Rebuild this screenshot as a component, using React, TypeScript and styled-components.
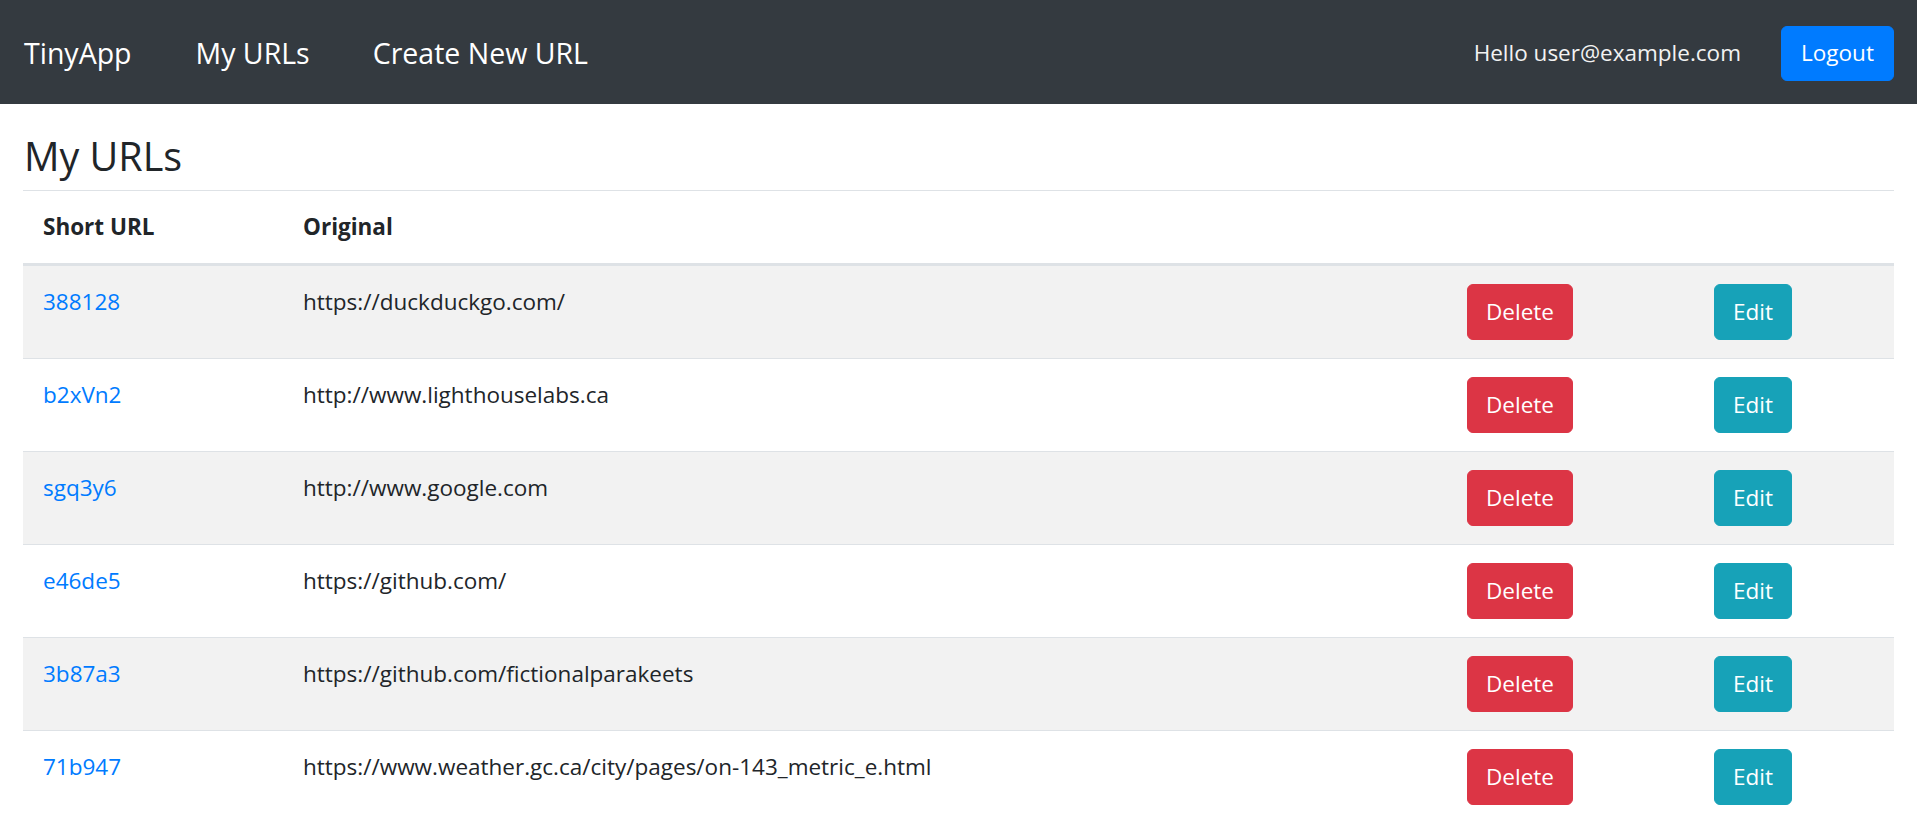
import React from "react";
import styled, { createGlobalStyle } from "styled-components";

const GlobalStyle = createGlobalStyle`
  html, body { margin: 0; padding: 0; background: #fff; }
  body {
    font-family: "Open Sans", "Noto Sans", sans-serif;
    font-size: 22.5px;
    line-height: 36px;
    color: #212529;
  }
  * { box-sizing: border-box; }
`;

const NavBar = styled.nav`
  height: 104px;
  background: #343a40;
  display: flex;
  align-items: center;
  padding: 2px 23px 0 24px;
`;

const Brand = styled.a`
  font-size: 28.5px;
  color: #fff;
  text-decoration: none;
  margin-right: 64px;
  white-space: nowrap;
`;

const NavLinks = styled.div`
  display: flex;
  gap: 63px;
  flex: 1;
`;

const NavLink = styled.a`
  font-size: 28.5px;
  color: #fff;
  text-decoration: none;
  white-space: nowrap;
`;

const Greeting = styled.span`
  color: #f2f2f2;
  margin-right: 40px;
  white-space: nowrap;
`;

const Button = styled.button<{ $variant: "primary" | "danger" | "info" }>`
  font-family: inherit;
  font-size: 22.5px;
  line-height: 36px;
  padding: 9px 18px;
  border: 1.5px solid transparent;
  border-radius: 6px;
  color: #fff;
  cursor: pointer;
  background: ${(p) =>
    p.$variant === "primary" ? "#007bff" : p.$variant === "danger" ? "#dc3545" : "#17a2b8"};
  border-color: ${(p) =>
    p.$variant === "primary" ? "#007bff" : p.$variant === "danger" ? "#dc3545" : "#17a2b8"};
`;

const LogoutButton = styled(Button)`
  height: 55px;
  width: 113px;
  padding: 0;
  display: flex;
  align-items: center;
  justify-content: center;
`;

const RowButton = styled(Button)<{ $w: number }>`
  height: 56px;
  width: ${(p) => p.$w}px;
  display: flex;
  align-items: center;
  justify-content: center;
  padding: 0;
`;

const Main = styled.main`
  padding: 27px 23px 0 23px;
`;

const Title = styled.h3`
  margin: 0;
  font-size: 39.5px;
  font-weight: 400;
  line-height: 50px;
  padding-left: 1px;
`;

const Divider = styled.hr`
  margin: 9px 0 0 0;
  border: 0;
  border-top: 1px solid #dee2e6;
`;

const Table = styled.table`
  width: 100%;
  border-collapse: collapse;
  table-layout: fixed;
`;

const HeadCell = styled.th<{ $w?: number }>`
  text-align: left;
  font-weight: 700;
  padding: 18px 18px 18px 20px;
  height: 72px;
  vertical-align: middle;
  border-bottom: 3px solid #dee2e6;
  width: ${(p) => (p.$w ? `${p.$w}px` : "auto")};
`;

const Row = styled.tr<{ $striped: boolean }>`
  background: ${(p) => (p.$striped ? "#f2f2f2" : "#fff")};
`;

const Cell = styled.td`
  padding: 18px 18px 18px 20px;
  vertical-align: top;
  height: 93px;
  white-space: nowrap;
  border-top: 1px solid #dee2e6;
`;

const ButtonCell = styled(Cell)`
  padding-left: 18px;
`;

const ShortLink = styled.a`
  color: #007bff;
  text-decoration: none;
`;

const urls: [string, string][] = [
  ["388128", "https://duckduckgo.com/"],
  ["b2xVn2", "http://www.lighthouselabs.ca"],
  ["sgq3y6", "http://www.google.com"],
  ["e46de5", "https://github.com/"],
  ["3b87a3", "https://github.com/fictionalparakeets"],
  ["71b947", "https://www.weather.gc.ca/city/pages/on-143_metric_e.html"],
];

export default function App() {
  return (
    <>
      <GlobalStyle />
      <NavBar>
        <Brand href="#">TinyApp</Brand>
        <NavLinks>
          <NavLink href="#">My URLs</NavLink>
          <NavLink href="#">Create New URL</NavLink>
        </NavLinks>
        <Greeting>Hello user@example.com</Greeting>
        <LogoutButton $variant="primary">Logout</LogoutButton>
      </NavBar>
      <Main>
        <Title>My URLs</Title>
        <Divider />
        <Table>
          <thead>
            <tr>
              <HeadCell $w={260}>Short URL</HeadCell>
              <HeadCell>Original</HeadCell>
              <HeadCell $w={247}></HeadCell>
              <HeadCell $w={198}></HeadCell>
            </tr>
          </thead>
          <tbody>
            {urls.map(([short, long], i) => (
              <Row key={short} $striped={i % 2 === 0}>
                <Cell>
                  <ShortLink href="#">{short}</ShortLink>
                </Cell>
                <Cell>{long}</Cell>
                <ButtonCell>
                  <RowButton $variant="danger" $w={106}>Delete</RowButton>
                </ButtonCell>
                <ButtonCell>
                  <RowButton $variant="info" $w={78}>Edit</RowButton>
                </ButtonCell>
              </Row>
            ))}
          </tbody>
        </Table>
      </Main>
    </>
  );
}
